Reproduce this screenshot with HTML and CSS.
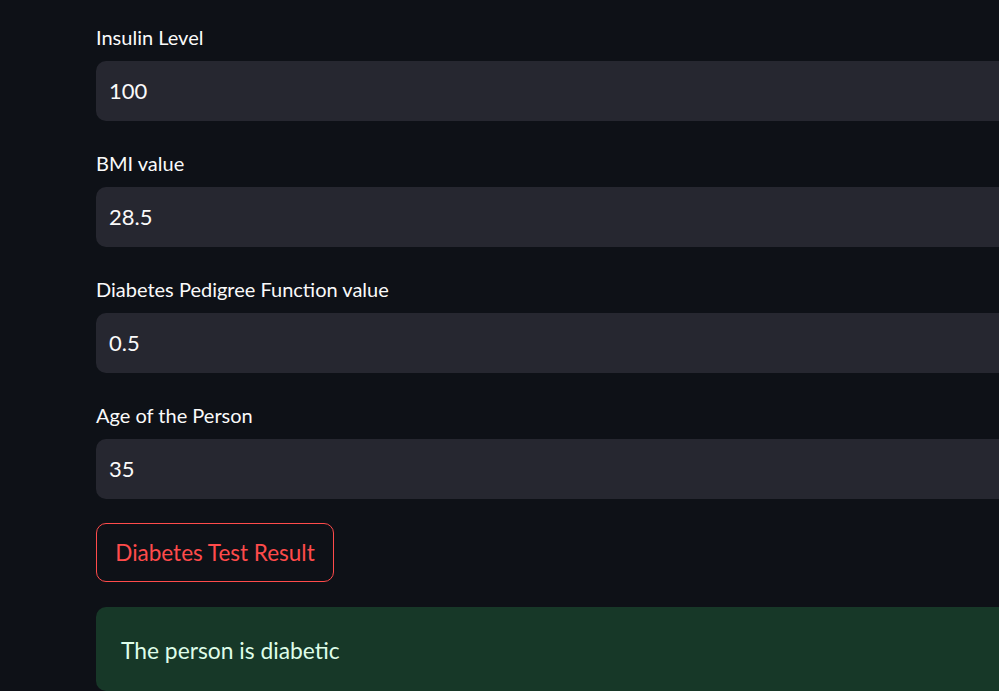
FILE: index.html
```html
<!DOCTYPE html>
<html lang="en">
<head>
<meta charset="utf-8">
<title>Diabetes Prediction</title>
<link rel="stylesheet" href="styles.css">
</head>
<body>
<main class="main">
  <div class="field">
    <label class="label">Insulin Level</label>
    <div class="input">100</div>
  </div>
  <div class="field">
    <label class="label">BMI value</label>
    <div class="input">28.5</div>
  </div>
  <div class="field">
    <label class="label">Diabetes Pedigree Function value</label>
    <div class="input">0.5</div>
  </div>
  <div class="field">
    <label class="label">Age of the Person</label>
    <div class="input">35</div>
  </div>
  <div class="actions">
    <button class="button">Diabetes Test Result</button>
  </div>
  <div class="alert">The person is diabetic</div>
</main>
</body>
</html>
```

FILE: styles.css
```css
html, body {
  margin: 0;
  padding: 0;
  background: #0e1117;
  overflow: hidden;
  height: 100%;
}
body {
  font-family: Lato, "Noto Sans", sans-serif;
  color: #fafafa;
}
.main {
  padding: 22px 0 0 96px;
  display: flex;
  flex-direction: column;
  gap: 27px;
  overflow: hidden;
}
.field {
  display: flex;
  flex-direction: column;
  gap: 8px;
}
.label {
  display: block;
  font-size: 20px;
  line-height: 31px;
  height: 31px;
  color: #fafafa;
}
.input {
  width: calc(100% + 40px);
  box-sizing: border-box;
  height: 60px;
  line-height: 60px;
  background: #262730;
  border-radius: 10px;
  padding-left: 13px;
  font-size: 22px;
  color: #fafafa;
}
.actions {
  display: flex;
  margin-top: -3px;
}
.button {
  box-sizing: border-box;
  height: 59px;
  width: 238px;
  background: #0e1117;
  border: 1px solid #ff4b4b;
  border-radius: 10px;
  color: #ff4b4b;
  font-family: Lato, "Noto Sans", sans-serif;
  font-size: 22.5px;
  padding: 0 18px;
}
.alert {
  width: calc(100% + 40px);
  box-sizing: border-box;
  margin-top: -2px;
  height: 84px;
  background: #173828;
  border-radius: 10px;
  color: #dffde9;
  font-size: 22.8px;
  line-height: 86px;
  padding-left: 25px;
}
```
